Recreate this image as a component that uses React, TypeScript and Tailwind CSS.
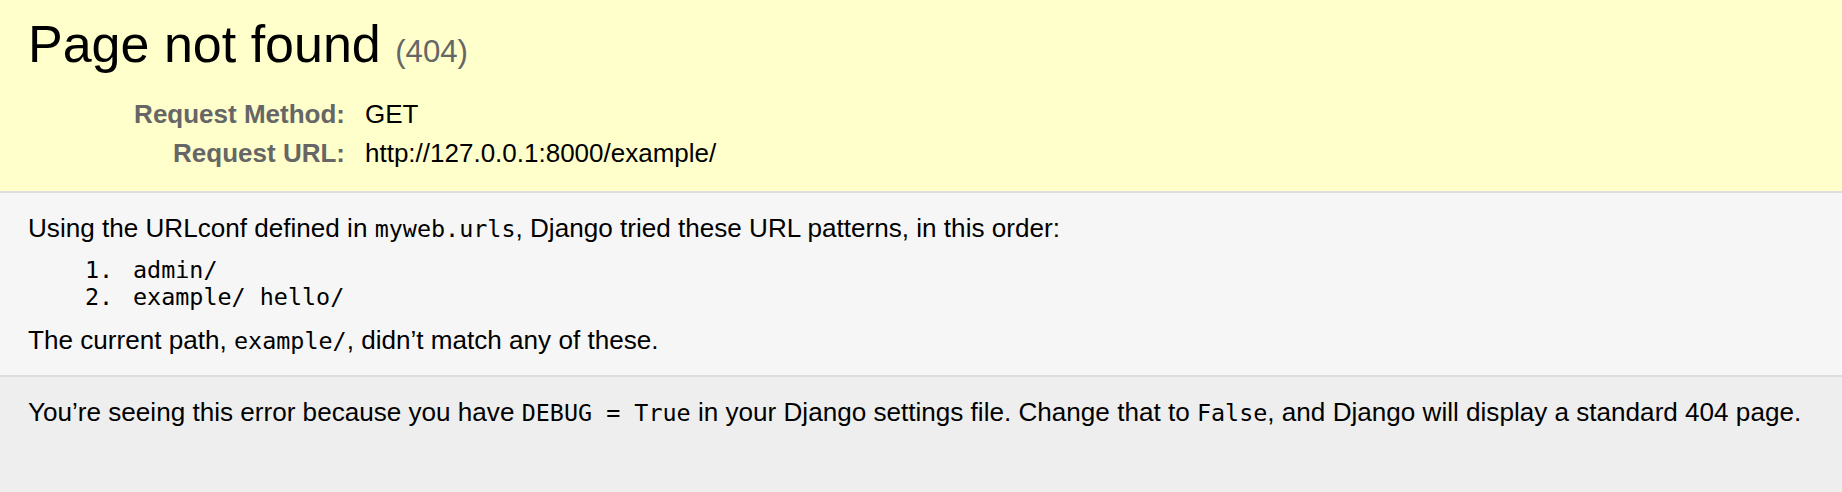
const mono = "font-['DejaVu_Sans_Mono',Menlo,monospace]";

const Code = ({ children }: { children: React.ReactNode }) => (
  <code className={`${mono} text-[23.4px] leading-none`}>{children}</code>
);

const patterns = ['admin/', 'example/ hello/'];

export default function App() {
  return (
    <div className="min-h-screen bg-[#eee] font-['Liberation_Sans',Arial,sans-serif] text-[26.1px] leading-[30px] text-black">
      {/* summary */}
      <header className="border-b-2 border-[#ddd] bg-[#ffc] px-[28px] pt-[14px] pb-[18px]">
        <h1 className="mb-[21px] text-[52px] leading-[60px] font-normal">
          Page not found <span className="text-[31.2px] leading-none text-[#666]">(404)</span>
        </h1>
        <div className="grid grid-cols-[330px_1fr] text-[26px] leading-[31px]">
          <div className="py-1 pr-[13px] text-right font-bold text-[#666]">Request Method:</div>
          <div className="py-1 pl-[7px]">GET</div>
          <div className="py-1 pr-[13px] text-right font-bold text-[#666]">Request URL:</div>
          <div className="py-1 pl-[7px]">http://127.0.0.1:8000/example/</div>
        </div>
      </header>

      {/* info */}
      <main className="border-b-2 border-[#ddd] bg-[#f6f6f6] px-[28px] pt-[20px] pb-[20px]">
        <p>
          Using the URLconf defined in <Code>myweb.urls</Code>, Django tried these URL patterns, in this
          order:
        </p>
        <ol className="my-[14px]">
          {patterns.map((p, i) => (
            <li key={p} className={`${mono} flex pl-[57px] text-[23.4px] leading-[27px]`}>
              <span className="w-[48px] shrink-0">{i + 1}.</span>
              <span className="whitespace-pre">{p}</span>
            </li>
          ))}
        </ol>
        <p>
          The current path, <Code>example/</Code>, didn’t match any of these.
        </p>
      </main>

      {/* explanation */}
      <footer className="bg-[#eee] px-[28px] pt-[20px] pb-[20px]">
        <p>
          You’re seeing this error because you have <Code>DEBUG = True</Code> in your Django settings file.
          Change that to <Code>False</Code>, and Django will display a standard 404 page.
        </p>
      </footer>
    </div>
  );
}
